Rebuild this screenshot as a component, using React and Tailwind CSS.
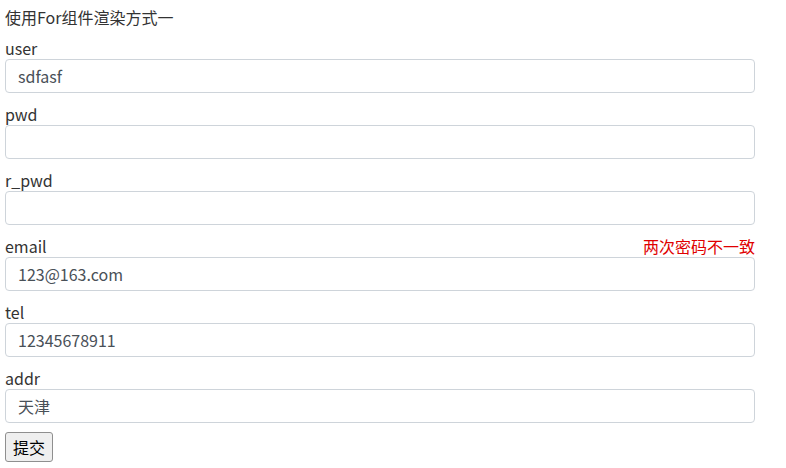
export default function App() {
  const fields = [
    { label: "user", value: "sdfasf" },
    { label: "pwd", value: "" },
    { label: "r_pwd", value: "" },
    { label: "email", value: "123@163.com", error: "两次密码不一致" },
    { label: "tel", value: "12345678911" },
    { label: "addr", value: "天津" },
  ];
  return (
    <div
      className="px-[5px] pt-[5px] text-[16px] leading-[24px] text-[#333]"
      style={{ fontFamily: '"Noto Sans CJK SC", "Noto Sans", sans-serif' }}
    >
      <div className="mb-[6px]">使用For组件渲染方式一</div>
      <form className="w-[750px]">
        {fields.map((f) => (
          <div key={f.label} className="mb-[8px]">
            <div className="flex justify-between pt-[2px] leading-[22px]">
              <span>{f.label}</span>
              {f.error && <span className="text-[#e00000]">{f.error}</span>}
            </div>
            <input
              readOnly
              value={f.value}
              className="block h-[34px] w-full rounded-[4px] border border-[#ced4da] bg-white px-[12px] text-[16px] text-[#495057] outline-none"
              style={{ fontFamily: '"Noto Sans CJK SC", "Noto Sans", sans-serif' }}
            />
          </div>
        ))}
        <button
          type="button"
          className="mt-[1px] h-[30px] rounded-[3px] border border-[#8f8f8f] bg-[#efefef] px-[7px] text-[16px] leading-[20px] text-black"
          style={{ fontFamily: '"Noto Sans CJK SC", sans-serif' }}
        >
          提交
        </button>
      </form>
    </div>
  );
}
